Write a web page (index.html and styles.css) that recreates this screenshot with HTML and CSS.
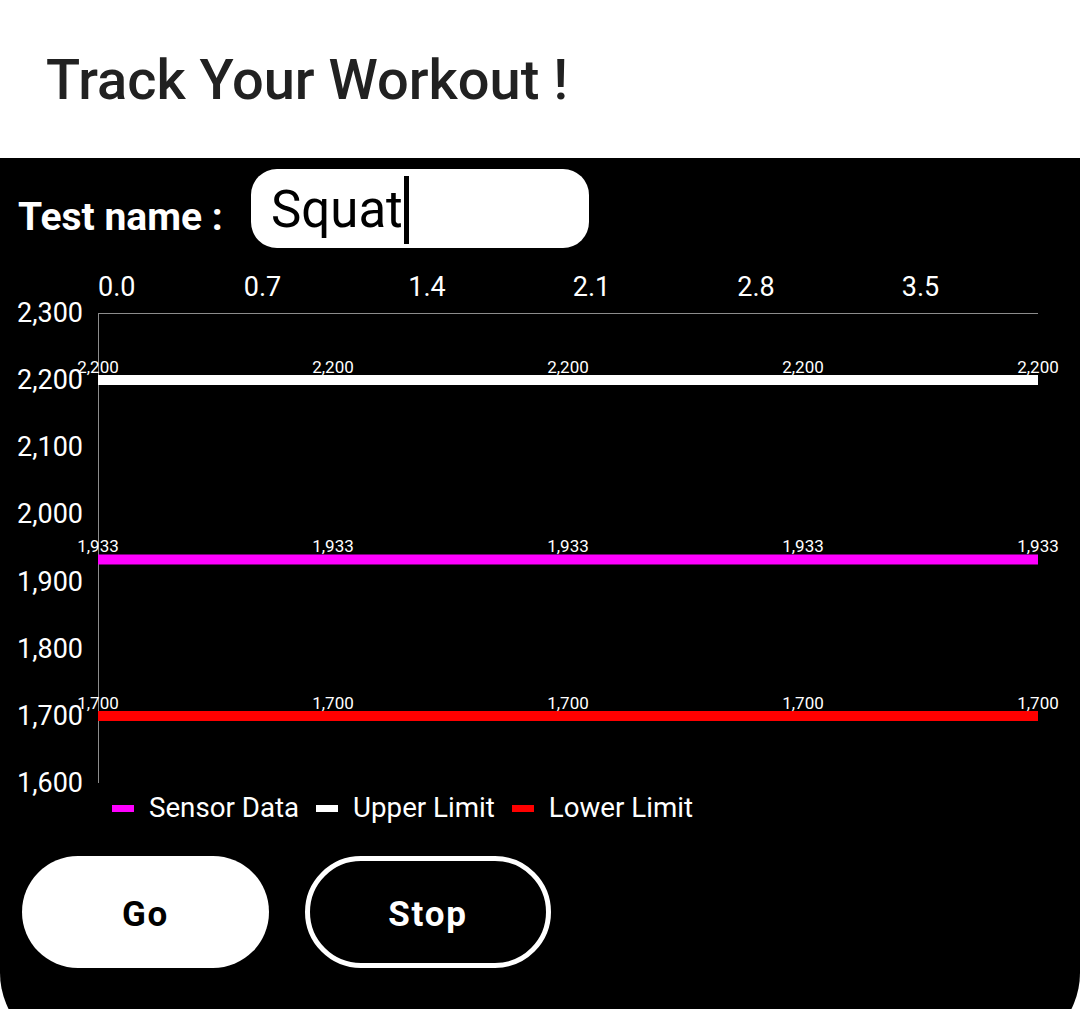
FILE: index.html
```html
<!DOCTYPE html>
<html lang="en">
<head>
<meta charset="utf-8">
<title>Track Your Workout</title>
<link rel="stylesheet" href="styles.css">
</head>
<body>
<header class="header">
  <h1 class="title">Track Your Workout !</h1>
</header>
<main class="panel">
  <div class="name-row">
    <label class="name-label" for="testname">Test name :</label>
    <div class="name-input" id="testname"><span class="name-text">Squat</span><span class="caret"></span></div>
  </div>
  <svg class="chart" width="1080" height="540" viewBox="0 258 1080 540" xmlns="http://www.w3.org/2000/svg">
    <g class="x-labels">
      <text x="98" y="296" text-anchor="start">0.0</text>
      <text x="262.5" y="296" text-anchor="middle">0.7</text>
      <text x="427" y="296" text-anchor="middle">1.4</text>
      <text x="591.5" y="296" text-anchor="middle">2.1</text>
      <text x="756" y="296" text-anchor="middle">2.8</text>
      <text x="920.5" y="296" text-anchor="middle">3.5</text>
    </g>
    <g class="y-labels">
      <text x="83" y="322" text-anchor="end">2,300</text>
      <text x="83" y="389" text-anchor="end">2,200</text>
      <text x="83" y="456" text-anchor="end">2,100</text>
      <text x="83" y="523" text-anchor="end">2,000</text>
      <text x="83" y="590.5" text-anchor="end">1,900</text>
      <text x="83" y="657.5" text-anchor="end">1,800</text>
      <text x="83" y="725" text-anchor="end">1,700</text>
      <text x="83" y="792" text-anchor="end">1,600</text>
    </g>
    <line class="axis" x1="98" y1="313.5" x2="1038" y2="313.5"/>
    <line class="axis" x1="98.5" y1="313" x2="98.5" y2="783"/>
    <line class="series upper" x1="98" y1="380" x2="1038" y2="380"/>
    <line class="series sensor" x1="98" y1="559.5" x2="1038" y2="559.5"/>
    <line class="series lower" x1="98" y1="716" x2="1038" y2="716"/>
    <g class="values">
      <text x="98" y="372.5">2,200</text>
      <text x="333" y="372.5">2,200</text>
      <text x="568" y="372.5">2,200</text>
      <text x="803" y="372.5">2,200</text>
      <text x="1038" y="372.5">2,200</text>
      <text x="98" y="552">1,933</text>
      <text x="333" y="552">1,933</text>
      <text x="568" y="552">1,933</text>
      <text x="803" y="552">1,933</text>
      <text x="1038" y="552">1,933</text>
      <text x="98" y="709">1,700</text>
      <text x="333" y="709">1,700</text>
      <text x="568" y="709">1,700</text>
      <text x="803" y="709">1,700</text>
      <text x="1038" y="709">1,700</text>
    </g>
  </svg>
  <ul class="legend">
    <li class="legend-item"><span class="swatch swatch-sensor"></span>Sensor Data</li>
    <li class="legend-item"><span class="swatch swatch-upper"></span>Upper Limit</li>
    <li class="legend-item"><span class="swatch swatch-lower"></span>Lower Limit</li>
  </ul>
  <div class="actions">
    <button class="btn btn-go" type="button">Go</button>
    <button class="btn btn-stop" type="button">Stop</button>
  </div>
</main>
</body>
</html>
```

FILE: styles.css
```css
html, body {
  margin: 0;
  padding: 0;
}

body {
  width: 1080px;
  height: 1009px;
  overflow: hidden;
  background: #ffffff;
  font-family: Roboto, "Noto Sans", "Liberation Sans", sans-serif;
}

.header {
  height: 158px;
  box-sizing: border-box;
  padding: 47px 0 0 46px;
}

.title {
  margin: 0;
  font-size: 56px;
  font-weight: 500;
  line-height: 66px;
  color: #212121;
  letter-spacing: 0;
}

.panel {
  display: flex;
  flex-direction: column;
  height: 895px;
  background: #000000;
  border-radius: 0 0 80px 80px;
  color: #ffffff;
}

.name-row {
  display: flex;
  align-items: flex-start;
  padding: 11px 0 0 18px;
  height: 100px;
  box-sizing: border-box;
  flex: none;
}

.name-label {
  font-size: 39px;
  font-weight: 700;
  line-height: 44px;
  margin-top: 26px;
  width: 233px;
  flex: none;
}

.name-input {
  display: flex;
  align-items: center;
  width: 338px;
  height: 79px;
  box-sizing: border-box;
  padding-left: 20px;
  background: #ffffff;
  border-radius: 26px;
  color: #000000;
}

.name-text {
  font-size: 51px;
  line-height: 56px;
  margin-top: 2px;
}

.caret {
  width: 5px;
  height: 68px;
  background: #000000;
  margin-left: 1px;
  margin-top: 2px;
}

.chart {
  display: block;
  flex: none;
  font-family: Roboto, "Noto Sans", "Liberation Sans", sans-serif;
}

.x-labels text,
.y-labels text {
  fill: #ffffff;
  font-size: 27px;
}

.values text {
  fill: #ffffff;
  font-size: 17px;
  text-anchor: middle;
}

.axis {
  stroke: #8c8c8c;
  stroke-width: 1;
}

.series {
  stroke-width: 10;
}

.upper { stroke: #ffffff; }
.sensor { stroke: #ff00ff; }
.lower { stroke: #ff0000; }

.legend {
  display: flex;
  align-items: center;
  list-style: none;
  margin: 0;
  padding: 0 0 0 112px;
  height: 20px;
  gap: 17px;
  font-size: 27.7px;
  line-height: 36px;
  flex: none;
}

.legend-item {
  display: flex;
  align-items: center;
  gap: 15px;
}

.swatch {
  width: 22px;
  height: 7px;
  flex: none;
  margin-top: 1px;
}

.swatch-sensor { background: #ff00ff; }
.swatch-upper { background: #ffffff; }
.swatch-lower { background: #ff0000; }

.actions {
  display: flex;
  gap: 36px;
  padding: 38px 0 0 22px;
}

.btn {
  width: 247px;
  height: 112px;
  border-radius: 56px;
  font-family: Roboto, "Noto Sans", "Liberation Sans", sans-serif;
  font-size: 35px;
  font-weight: 700;
  letter-spacing: 1.8px;
  padding: 5px 0 0 0;
  box-sizing: border-box;
  cursor: pointer;
}

.btn-go {
  background: #ffffff;
  color: #000000;
  border: none;
}

.btn-stop {
  width: 246px;
  background: #000000;
  color: #ffffff;
  border: 5px solid #ffffff;
}
```
